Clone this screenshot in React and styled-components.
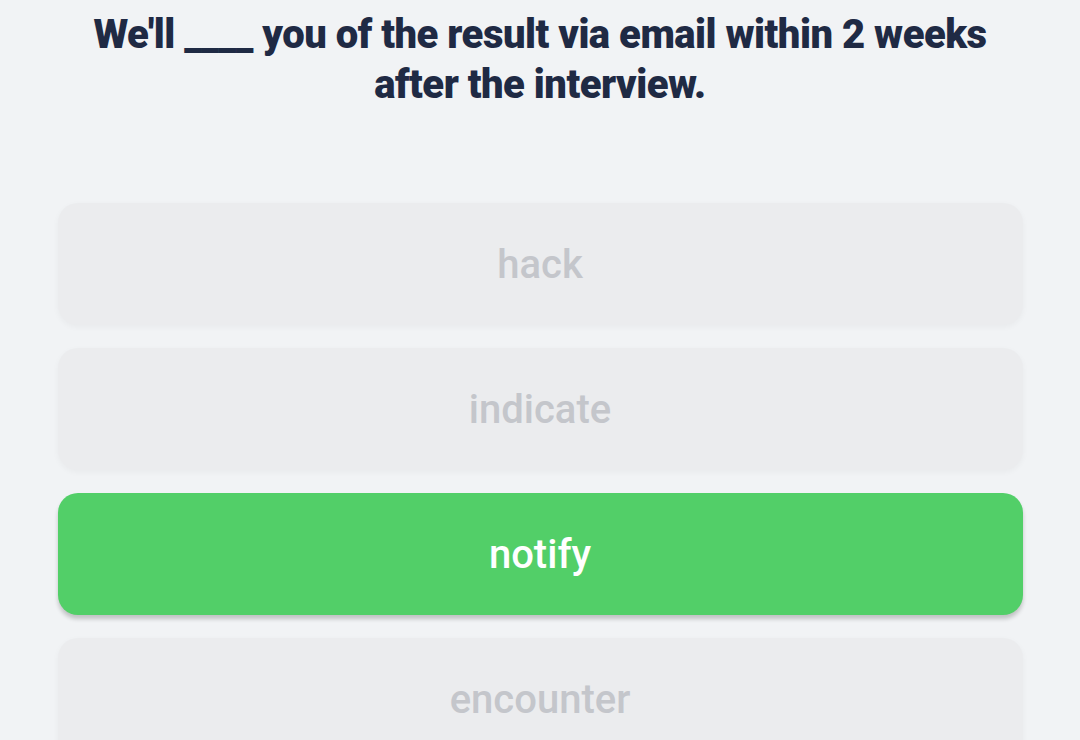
import styled, { createGlobalStyle } from "styled-components"

const GlobalStyle = createGlobalStyle`
    html, body {
        margin: 0;
        padding: 0;
        background-color: #f1f3f5;
        font-family: Roboto, "Liberation Sans", sans-serif;
    }
`

const options = [
    { id: 1, label: "hack" },
    { id: 2, label: "indicate" },
    { id: 3, label: "notify", selected: true },
    { id: 4, label: "encounter" },
]

export default function App(){
    return(
        <Page>
            <GlobalStyle />
            <Question>
                We'll ____ you of the result via email within 2 weeks after the interview.
            </Question>
            <Options>
                {options.map((option) => (
                    <Option key={option.id} selected={option.selected}>
                        {option.label}
                    </Option>
                ))}
            </Options>
        </Page>
    )
}

const Page = styled.div`
    width: 1080px;
    height: 740px;
    overflow: hidden;
    display: flex;
    flex-direction: column;
    align-items: center;
    background-color: #f1f3f5;
`

const Question = styled.h1`
    width: 940px;
    margin: 10px 0 0;
    font-family: Roboto, "Liberation Sans", sans-serif;
    font-weight: 900;
    font-size: 40px;
    line-height: 50px;
    letter-spacing: -0.5px;
    text-align: center;
    color: #1f2a44;
`

const Options = styled.ul`
    width: 965px;
    margin: 93px 0 0;
    padding: 0;
    list-style: none;
    display: flex;
    flex-direction: column;
    gap: 23px;
`

const Option = styled.li`
    display: flex;
    justify-content: center;
    align-items: center;
    height: 122px;
    border-radius: 20px;
    font-family: Roboto, "Liberation Sans", sans-serif;
    font-weight: 500;
    font-size: 40px;
    color: ${props => props.selected ? "#ffffff" : "#c4c6cb"};
    background-color: ${props => props.selected ? "#52cf68" : "#ebecee"};
    box-shadow: ${props => props.selected
        ? "0 4px 4px rgba(0, 0, 0, 0.2)"
        : "0 2px 6px rgba(0, 0, 0, 0.04)"};
`
